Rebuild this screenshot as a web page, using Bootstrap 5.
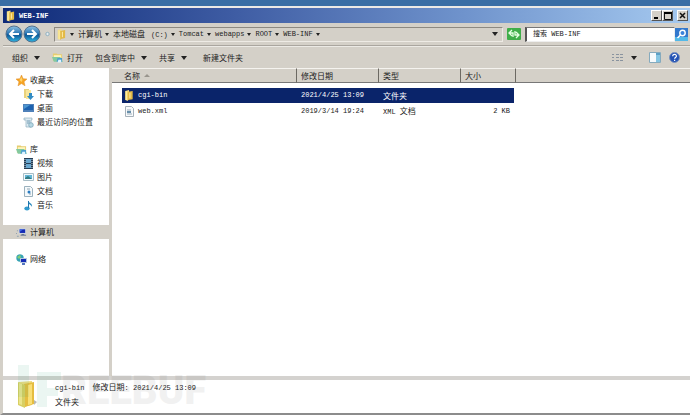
<!DOCTYPE html>
<html lang="zh-CN">
<head>
<meta charset="utf-8">
<meta name="viewport" content="width=device-width, initial-scale=1">
<title>WEB-INF</title>
<link rel="stylesheet" href="https://cdn.jsdelivr.net/npm/bootstrap@5.3.0/dist/css/bootstrap.min.css">
<style>
  body { background: #3a6ea5; color: #222; font: 8px/14px "Noto Sans CJK SC", sans-serif; padding-top: 6px; }
  button, input { font: inherit; color: inherit; }
  button { background: none; border: 0; padding: 0; }
  svg { display: block; flex: none; }
  .latin { font-family: "Liberation Mono", monospace; font-size: 7px; }
  .explorer { background: #d4d0c8; border-left: 3px solid #d4d0c8; border-top: 2px solid #eceae6; border-bottom: 2px solid #8c8c8c; }
  .title-strip { height: 15px; background: linear-gradient(90deg, #0e2a78, #3f5da4 34%, #6f93cc 67%, #a6caf0); color: #fff; padding: 0 2px 0 3px; }
  .title-strip h1 { font-size: 7px; line-height: 14px; font-weight: 700; }
  .win-btn { width: 11px; height: 11px; background: #d4d0c8; border: 1px solid; border-color: #fff #555 #555 #fff; display: flex; align-items: center; justify-content: center; }
  .address-row { height: 23px; border-bottom: 1px solid #aaa69f; padding: 0 2px; }
  .address-box { height: 15px; border: 1px solid; border-color: #8d8981 #eeebe5 #eeebe5 #8d8981; padding: 0 4px 0 2px; }
  .crumbs a { color: inherit; text-decoration: none; }
  .crumbs li { display: flex; align-items: center; gap: 3px; }
  .caret { width: 0; height: 0; border: 2px solid transparent; border-top: 3px solid #222; border-bottom: 0; }
  .caret-lg { border-width: 3px 3px 0; border-top-width: 4px; }
  .menu-btn { display: flex; align-items: center; gap: 6px; }
  .search-box { width: 150px; height: 15px; border: 1px solid; border-color: #777 #eee #eee #555; border-left-width: 2px; border-radius: 0; padding: 0 0 0 6px; background: #fff; font-family: "Liberation Mono", "Noto Sans CJK SC", monospace; font-size: 7px; }
  .search-box::placeholder { color: #222; opacity: 1; }
  .tool-row { height: 22px; padding: 0 10px 0 9px; border-top: 1px solid #eceae5; }
  .side { width: 109px; background: #fff; border-right: 3px solid #d4d0c8; padding-top: 5px; }
  .side ul { margin: 0 0 13px; padding: 0; list-style: none; }
  .side a { display: flex; align-items: center; gap: 3px; height: 14px; padding-left: 13px; color: inherit; text-decoration: none; }
  .side .sub a { padding-left: 20px; }
  .side .current { background: #d4d0c8; }
  .files { width: 100%; table-layout: fixed; border-collapse: separate; border-spacing: 0; }
  .files th { height: 15px; background: #d4d0c8; font-weight: 400; border-bottom: 1px solid #777; border-top: 1px solid #f5f3ef; padding: 0 4px; line-height: 13px; }
  .files .split { border-right: 1px solid #6c6963; }
  .files td { height: 15px; padding: 0 4px; line-height: 15px; white-space: nowrap; vertical-align: middle; }
  .files .spacer td { height: 5px; line-height: 5px; }
  .files .name-head, .files .name-cell { padding-left: 2px; }
  .files .chosen .fill { background: #0a246a; color: #fff; }
  .files .row-end { border-right: 2px solid #fff; }
  .col-gap { width: 10px; } .col-name { width: 175px; } .col-mid { width: 82px; } .col-size { width: 55px; }
  .sort-mark { width: 0; height: 0; border: 3px solid transparent; border-bottom: 3px solid #99958d; border-top: 0; }
  .details { height: 37px; background: #fff; border-top: 4px solid #d4d2cf; padding-left: 12px; }
  .details p { margin: 0; line-height: 13px; }
  .brand { position: absolute; left: 15px; bottom: 4px; opacity: .08; pointer-events: none; }
  .brand text { font: 900 40px Roboto, sans-serif; fill: #555; }
</style>
<script src="https://cdn.jsdelivr.net/npm/bootstrap@5.3.0/dist/js/bootstrap.bundle.min.js"></script>
</head>
<body>
<svg width="0" height="0" class="position-absolute" aria-hidden="true">
  <defs>
    <linearGradient id="orb" x2="0" y2="1"><stop stop-color="#8fc3e4"/><stop offset=".45" stop-color="#2f79b5"/><stop offset=".55" stop-color="#0d5796"/><stop offset="1" stop-color="#2fb6e2"/></linearGradient>
    <linearGradient id="gold"><stop stop-color="#f0d978"/><stop offset=".5" stop-color="#fff0a8"/><stop offset="1" stop-color="#e2b840"/></linearGradient>
    <symbol id="folder" viewBox="0 0 10 12"><path d="M1 1l4-1v10l-4 1z" fill="#f3dc84"/><path d="M4 2l5-1v9l-5 1z" fill="#e3b945"/><path d="M1 1l3 1v10l-3-1z" fill="url(#gold)"/><path d="M6 3v6" stroke="#fff0b5"/></symbol>
    <symbol id="library" viewBox="0 0 12 11"><path d="M1 1h4l1 1h5v7H1z" fill="#e6cd70"/><path d="M2 3h8v5H2z" fill="#fff5bd"/><path d="M0 5h9l3 5H2z" fill="#83c99f"/><path d="M6 6h5v4H5z" fill="#4b9fce"/><path d="M7 8h3v3H6z" fill="#dff4ff"/></symbol>
    <symbol id="screens" viewBox="0 0 12 11"><path d="M3 1h8v6H3z" fill="#cdd5df"/><path d="M4 2h6v4H4z" fill="#152bb5"/><path d="M4 2h4L4 5z" fill="#446be4"/><path d="M6 7h3v1h2v1H5V8h1z" fill="#6b7994"/><path d="M1 3h1v1H1zM0 6h1v1H0zM1 9h2v1H1z" fill="#8d9fae"/></symbol>
  </defs>
</svg>

<div class="explorer d-flex flex-column position-relative" style="min-height:calc(100vh - 6px)">
  <header class="title-strip d-flex align-items-center">
    <svg width="9" height="12"><use href="#folder"/></svg>
    <h1 class="latin m-0 ms-1">WEB-INF</h1>
    <div class="d-flex ms-auto">
      <button class="win-btn" aria-label="最小化"><svg width="7" height="7"><path d="M1 5h4v2H1z"/></svg></button>
      <button class="win-btn" aria-label="最大化"><svg width="8" height="8"><path d="M.5 1.5h7v6h-7z" fill="none" stroke="#111"/><path d="M0 0h8v2H0z"/></svg></button>
      <button class="win-btn ms-1" aria-label="关闭"><svg width="7" height="7"><path d="M1 1l5 5M6 1L1 6" stroke="#111" stroke-width="1.5"/></svg></button>
    </div>
  </header>

  <nav class="address-row d-flex align-items-center" aria-label="地址">
    <button aria-label="后退"><svg width="18" height="18" viewBox="0 0 18 18"><circle cx="9" cy="9" r="8" fill="url(#orb)" stroke="#54718e"/><path d="M14 9H5M9 5L5 9l4 4" fill="none" stroke="#fff" stroke-width="2"/></svg></button>
    <button aria-label="前进"><svg width="18" height="18" viewBox="0 0 18 18"><circle cx="9" cy="9" r="8" fill="url(#orb)" stroke="#54718e"/><path d="M4 9h9M9 5l4 4-4 4" fill="none" stroke="#fff" stroke-width="2"/></svg></button>
    <button class="mx-1" aria-label="历史记录"><svg width="5" height="6"><circle cx="2.5" cy="3" r="1.7" fill="#e6edf0" stroke="#8fb0c0"/></svg></button>
    <div class="address-box d-flex align-items-center flex-grow-1">
      <svg class="me-1" width="9" height="11"><use href="#folder"/></svg>
      <ol class="crumbs list-unstyled d-flex align-items-center gap-1 m-0">
        <li><span class="caret"></span></li>
        <li><a href="#">计算机</a><span class="caret"></span></li>
        <li><a href="#">本地磁盘 <span class="latin">&nbsp;(C:)</span></a><span class="caret"></span></li>
        <li><a href="#" class="latin">Tomcat</a><span class="caret"></span></li>
        <li><a href="#" class="latin">webapps</a><span class="caret"></span></li>
        <li><a href="#" class="latin">ROOT</a><span class="caret"></span></li>
        <li><a href="#" class="latin">WEB-INF</a><span class="caret"></span></li>
      </ol>
      <button class="ms-auto" aria-label="以前的位置"><span class="caret caret-lg d-block"></span></button>
    </div>
    <button class="mx-1" aria-label="刷新"><svg width="14" height="12" viewBox="0 0 14 12"><rect width="14" height="12" rx="1" fill="#3fae49"/><path d="M5 2L2 5l3 3M2.500 5H6v4M9 10l3-3-3-3M11.500 7H8V3" fill="none" stroke="#e5ffe2" stroke-width="1.3"/></svg></button>
    <input class="search-box" type="text" placeholder="搜索 WEB-INF" aria-label="搜索 WEB-INF">
    <button aria-label="搜索"><svg width="13" height="13" viewBox="0 0 13 13"><rect width="13" height="13" fill="#3278cd"/><path d="M0 9h13v4H0z" fill="#53b9e8"/><circle cx="7.5" cy="5" r="2.7" fill="#3b82da" stroke="#fff" stroke-width="1.4"/><path d="M5.500 7L2.500 10" stroke="#fff" stroke-width="1.6"/></svg></button>
  </nav>

  <div class="tool-row d-flex align-items-center">
    <button class="menu-btn">组织<span class="caret caret-lg"></span></button>
    <button class="d-flex align-items-center gap-1 ms-2 ps-1"><svg width="11" height="11"><use href="#library"/></svg>打开</button>
    <button class="menu-btn ms-2 ps-1">包含到库中<span class="caret caret-lg"></span></button>
    <button class="menu-btn ms-2 ps-1">共享<span class="caret caret-lg"></span></button>
    <button class="ms-3">新建文件夹</button>
    <div class="d-flex align-items-center ms-auto gap-2">
      <button class="d-flex align-items-center gap-2" aria-label="更改视图"><svg width="11" height="10"><path d="M0 1.500h2m2 0h3m1 0h3M0 4.500h2m2 0h3m1 0h3M0 7.500h2m2 0h3m1 0h3" stroke="#89939f"/></svg><span class="caret caret-lg"></span></button>
      <button class="ms-1" aria-label="预览窗格"><svg width="12" height="11"><path d="M.5.5h11v10H.5z" fill="#f6fafc" stroke="#86aabd"/><path d="M7 1h4v2H7z" fill="#5b9fc5"/><path d="M7 3h4v7H7z" fill="#85c5e2"/></svg></button>
      <button aria-label="帮助"><svg width="11" height="11" viewBox="0 0 11 11"><circle cx="5.500" cy="5.500" r="5" fill="#2453b5" stroke="#7d93bd"/><path d="M3.700 4.200c0-2.500 3.900-2.300 3.700 0 0 1.200-1.800 1.200-1.800 2.500M5.600 7.700v1.300" fill="none" stroke="#fff" stroke-width="1.200"/></svg></button>
    </div>
  </div>

  <div class="d-flex flex-grow-1">
    <nav class="side flex-shrink-0" aria-label="导航窗格">
      <ul>
        <li><a href="#"><svg width="11" height="11" viewBox="0 0 11 11"><path d="M5.500 0l1.600 3.700 3.900.3-3 2.700 1 4.100-3.500-2.200L2 10.800l1-4.100L0 4l3.900-.3z" fill="#f7a521" stroke="#df8d2b" stroke-width=".5"/><path d="M5.500 2l1 3-1 2-2-2z" fill="#ffd36b"/></svg>收藏夹</a></li>
        <li class="sub"><a href="#"><svg width="11" height="11" viewBox="0 0 11 11"><path d="M1 0h5v9H1z" fill="#ead27b"/><path d="M3 1h5v9H3z" fill="#f8e69c"/><path d="M6 4h3v3h2L7.500 11 4 7h2z" fill="#328bc3"/></svg>下载</a></li>
        <li class="sub"><a href="#"><svg width="11" height="10"><path d="M0 1h11v8H0z" fill="#4e80b9"/><path d="M1 2h9v5H1z" fill="#1d62b0"/><path d="M1 2h6L1 6z" fill="#4d97d1"/></svg>桌面</a></li>
        <li class="sub"><a href="#"><svg width="11" height="11"><path d="M1 1h8v2H8v7H3V3H1z" fill="#dceaf1" stroke="#91afbf" stroke-width=".7"/><path d="M4 4h3M4 6h3" stroke="#6f98b0"/><circle cx="8" cy="8" r="2.300" fill="#b7d8e4" stroke="#75a1b5" stroke-width=".7"/></svg>最近访问的位置</a></li>
      </ul>
      <ul>
        <li><a href="#"><svg width="11" height="11"><use href="#library"/></svg>库</a></li>
        <li class="sub"><a href="#"><svg width="11" height="11"><path d="M1 0h9v11H1z" fill="#243d55"/><path d="M3 1h5v4H3zM3 6h5v4H3z" fill="#69a7cf"/><path d="M2 1v9M9 1v9" stroke="#c4d5df" stroke-dasharray="1"/></svg>视频</a></li>
        <li class="sub"><a href="#"><svg width="11" height="10"><path d="M.5 1.500h10v7H.5z" fill="#eff8fb" stroke="#a8bdc6"/><path d="M2 3h7v4H2z" fill="#63b5d5"/><path d="M2 6l3-2 4 3H2z" fill="#327c85"/></svg>图片</a></li>
        <li class="sub"><a href="#"><svg width="11" height="11"><path d="M1.500.5h6l2 2v8h-8z" fill="#f5f9fb" stroke="#9bb1bd"/><path d="M4 3h3M6 8h2" stroke="#90a6b4"/><circle cx="6" cy="6" r="1.500" fill="#287bc1"/></svg>文档</a></li>
        <li class="sub"><a href="#"><svg width="11" height="11"><path d="M5 0c0 3 5 3 4 7-.5-2-2-2-3-3v4z" fill="#2687bd"/><ellipse cx="4" cy="8.500" rx="2.700" ry="2" fill="#329bce"/><path d="M5.500 1v7" stroke="#2176ae"/></svg>音乐</a></li>
      </ul>
      <ul>
        <li class="current"><a href="#" aria-current="page"><svg width="11" height="11"><use href="#screens"/></svg>计算机</a></li>
      </ul>
      <ul>
        <li><a href="#"><svg width="11" height="11" viewBox="0 0 11 11"><circle cx="4" cy="4" r="3.700" fill="#36a3b4"/><path d="M1 3l3-2 1 2-2 2z" fill="#83cf75"/><path d="M4 4h7v5H4z" fill="#b7c8df"/><path d="M5 5h5v3H5z" fill="#1429b5"/><path d="M6 9h3v2H6z" fill="#5476bf"/></svg>网络</a></li>
      </ul>
    </nav>

    <main class="flex-grow-1 bg-white">
      <table class="files">
        <colgroup><col class="col-gap"><col class="col-name"><col class="col-mid"><col class="col-mid"><col class="col-size"><col></colgroup>
        <thead>
          <tr><th></th><th class="split name-head"><span class="d-flex align-items-center gap-1">名称<span class="sort-mark"></span></span></th><th class="split">修改日期</th><th class="split">类型</th><th class="split">大小</th><th></th></tr>
        </thead>
        <tbody>
          <tr class="spacer"><td colspan="6"></td></tr>
          <tr class="chosen"><td></td><td class="fill name-cell"><span class="d-flex align-items-center gap-1"><svg width="10" height="11"><use href="#folder"/></svg><span class="latin">cgi-bin</span></span></td><td class="fill latin">2021/4/25 13:09</td><td class="fill">文件夹</td><td class="fill row-end"></td><td></td></tr>
          <tr><td></td><td class="name-cell"><span class="d-flex align-items-center gap-1"><svg width="10" height="11"><path d="M1.500.5h6l2 2v8h-8z" fill="#f8fafb" stroke="#a6b1ba"/><path d="M3 4h4M3 8h5" stroke="#9cafbd"/><path d="M3 5h4v2H3z" fill="#6890ab"/></svg><span class="latin">web.xml</span></span></td><td class="latin">2019/3/14 19:24</td><td><span class="latin">XML </span>文档</td><td class="latin text-end row-end">2 KB</td><td></td></tr>
        </tbody>
      </table>
    </main>
  </div>

  <footer class="details d-flex align-items-start">
    <svg width="24" height="29" viewBox="0 0 24 29"><path d="M4 2l13-1v24l-9 2z" fill="#eedc82"/><path d="M9 4l10-2v22l-9 3z" fill="#e5bd40"/><path d="M13 5l4-1v20l-4 1z" fill="#f9df77"/><path d="M3 2l7 3v23l-7-3z" fill="#d8cf63"/><path d="M4 3l3 1v21l-3-1z" fill="#ebe58c"/><path d="M19 20l3 2-3 3z" fill="#b9bab3"/></svg>
    <div class="ms-3">
      <p><span class="latin me-1">cgi-bin </span>修改日期<span class="latin">: 2021/4/25 13:09</span></p>
      <p>文件夹</p>
    </div>
  </footer>
  <svg class="brand" width="200" height="44" viewBox="0 0 200 44"><path d="M0 0h11v32H0z" fill="#149b6c"/><path d="M19 7h24v8H29v8h11v8H29v11H19z" fill="#149b6c"/><text x="43" y="39">REEBUF</text></svg>
</div>
</body>
</html>
